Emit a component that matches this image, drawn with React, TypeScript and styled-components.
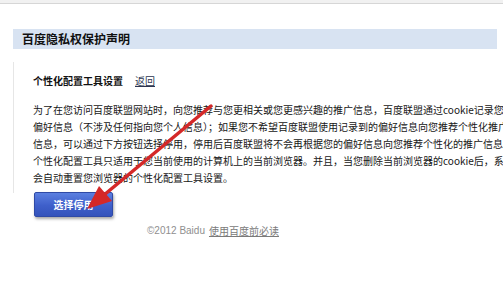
import React from "react";
import styled, { createGlobalStyle } from "styled-components";

const GlobalStyle = createGlobalStyle`
  html, body {
    margin: 0;
    padding: 0;
    background: #ffffff;
    overflow: hidden;
  }
  body {
    font-family: "Noto Sans CJK SC", "Liberation Sans", sans-serif;
    color: #222;
  }
`;

const Page = styled.div`
  position: relative;
  width: 503px;
  height: 306px;
  overflow: hidden;
`;

const TopStrip = styled.div`
  height: 3px;
  background: #f1f1f1;
  border-bottom: 1px solid #d6d6d6;
`;

const Main = styled.div`
  padding: 25px 6px 0 13px;
`;

const TitleBar = styled.div`
  height: 20px;
  background: #d8e3f2;
  display: flex;
  align-items: center;
  padding-left: 9px;
  font-size: 12px;
  font-weight: 700;
  color: #111;
  line-height: 20px;
`;

const Section = styled.div`
  margin-top: 13px;
  border-left: 1px solid #e6e6e6;
  padding: 12px 0 0 19px;
  height: 119px;
`;

const SubTitle = styled.div`
  display: flex;
  align-items: center;
  gap: 12px;
  font-size: 10px;
  line-height: 14px;
  white-space: nowrap;
`;

const SubTitleText = styled.span`
  font-weight: 700;
  color: #111;
`;

const BackLink = styled.a`
  color: #2c3550;
  text-decoration: underline;
`;

const Paragraph = styled.div`
  margin-top: 13px;
  font-size: 10px;
  line-height: 17px;
  color: #161616;
  white-space: nowrap;
`;

const Line = styled.div``;

const Button = styled.button`
  margin: 0 0 0 21px;
  margin-top: -1px;
  width: 79px;
  height: 25px;
  border: 1px solid #2f4aa6;
  border-radius: 2px;
  background: linear-gradient(#5b7fe0, #3e5fca 55%, #3453bb);
  box-shadow: 1px 2px 3px rgba(0, 0, 0, 0.35);
  color: #fff;
  font-family: "Noto Sans CJK SC", sans-serif;
  font-size: 10px;
  font-weight: 700;
  padding: 0;
  display: flex;
  align-items: center;
  justify-content: center;
`;

const Footer = styled.div`
  margin-top: 7px;
  padding-left: 134px;
  font-size: 10px;
  line-height: 14px;
  color: #8f8f8f;
  white-space: nowrap;
  display: flex;
  gap: 4px;
`;

const Copy = styled.span`
  font-family: "Liberation Sans", sans-serif;
`;

const FooterLink = styled.a`
  color: #7a7a7a;
  text-decoration: underline;
`;

const ArrowLayer = styled.svg`
  position: absolute;
  left: 0;
  top: 0;
  pointer-events: none;
`;

const lines = [
  "为了在您访问百度联盟网站时，向您推荐与您更相关或您更感兴趣的推广信息，百度联盟通过cookie记录您的",
  "偏好信息（不涉及任何指向您个人信息）；如果您不希望百度联盟使用记录到的偏好信息向您推荐个性化推广",
  "信息，可以通过下方按钮选择停用，停用后百度联盟将不会再根据您的偏好信息向您推荐个性化的推广信息。",
  "个性化配置工具只适用于您当前使用的计算机上的当前浏览器。并且，当您删除当前浏览器的cookie后，系统",
  "会自动重置您浏览器的个性化配置工具设置。",
];

export default function App() {
  return (
    <Page>
      <GlobalStyle />
      <TopStrip />
      <Main>
        <TitleBar>百度隐私权保护声明</TitleBar>
        <Section>
          <SubTitle>
            <SubTitleText>个性化配置工具设置</SubTitleText>
            <BackLink>返回</BackLink>
          </SubTitle>
          <Paragraph>
            {lines.map((l, i) => (
              <Line key={i}>{l}</Line>
            ))}
          </Paragraph>
        </Section>
        <Button>选择停用</Button>
        <Footer>
          <Copy>©2012 Baidu</Copy>
          <FooterLink>使用百度前必读</FooterLink>
        </Footer>
      </Main>
      <ArrowLayer width="503" height="306" viewBox="0 0 503 306">
        <line x1="211" y1="106" x2="104" y2="195" stroke="#d42828" strokeWidth="3.5" strokeLinecap="round" />
        <polygon points="87,209 99,186 112,201" fill="#d42828" />
      </ArrowLayer>
    </Page>
  );
}
